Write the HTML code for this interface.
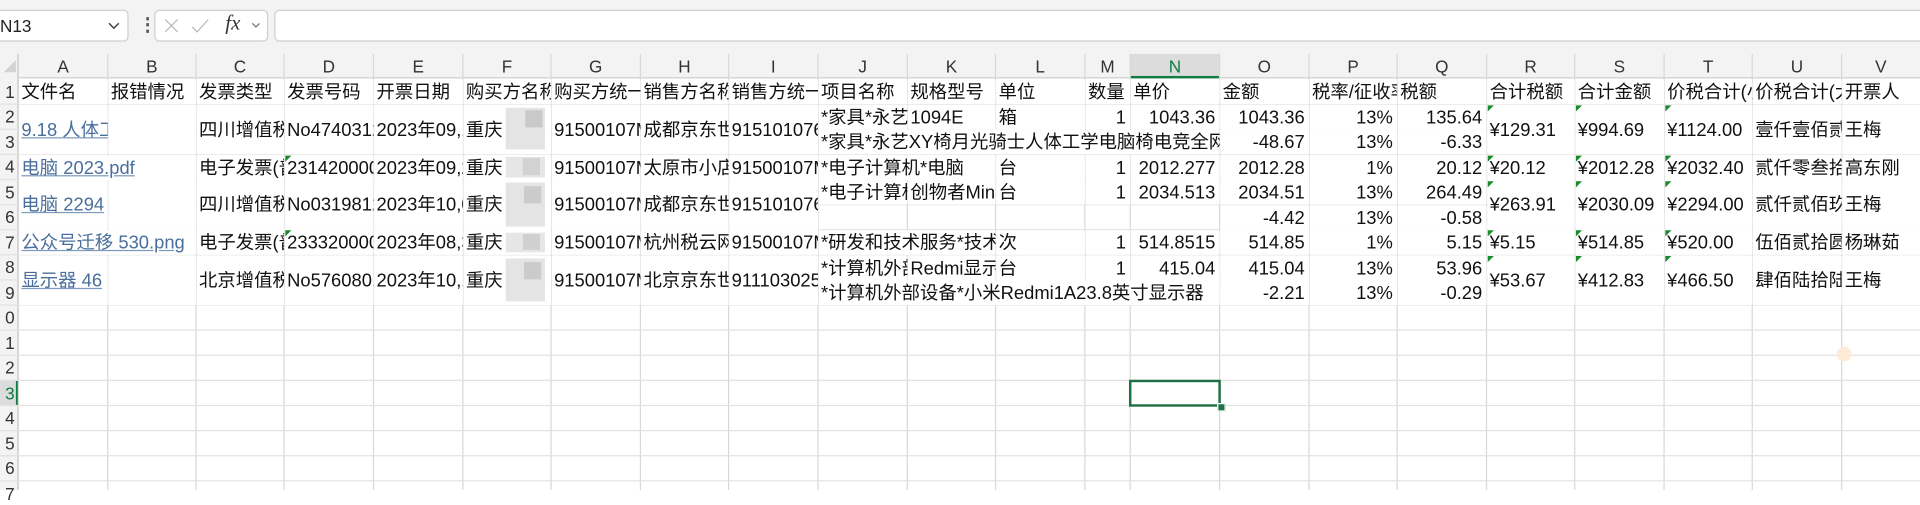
<!DOCTYPE html>
<html><head><meta charset="utf-8">
<style>
html,body{margin:0;padding:0;background:#fff;width:1920px;height:490px;overflow:hidden}
#s{position:absolute;left:0;top:0;width:1568px;height:400px;transform:scale(1.22449,1.225);transform-origin:0 0;font-family:"Liberation Sans","Noto Sans CJK SC",sans-serif;font-size:15px;color:#111}
.c{position:absolute;overflow:hidden;white-space:nowrap;background:#fff;padding-left:2px;box-sizing:border-box;height:20px;line-height:21px}
.m{height:40.5px;line-height:41px}
.r{text-align:right;padding-right:3px;padding-left:0}
.a{color:#4a6f9c;text-decoration:underline;text-decoration-color:#7d99bb}
.h{position:absolute;top:44px;height:19px;line-height:20px;text-align:center;color:#333;font-size:14px}
.rn{position:absolute;left:-4px;width:16px;text-align:right;color:#333;font-size:14px;line-height:20px;overflow:hidden;direction:rtl}
.t{position:absolute;width:0;height:0;border-top:5px solid #1a8a2a;border-right:5px solid transparent}
.b{position:absolute;background:#dedede}
</style></head><body><div id="s">
<div style="position:absolute;left:0;top:0;width:1568px;height:44px;background:#f3f3f3"></div>
<div style="position:absolute;left:-4px;top:8px;width:109px;height:26px;background:#fff;border:1px solid #cfcfcf;border-radius:4px;box-sizing:border-box"></div>
<div style="position:absolute;left:0;top:8px;line-height:26px;font-size:14px;color:#222">N13</div>
<svg style="position:absolute;left:88px;top:16px" width="10" height="10"><path d="M1 3 L5 7 L9 3" stroke="#444" fill="none" stroke-width="1.2"/></svg>
<div style="position:absolute;left:113px;top:11px;font-size:15px;color:#555;font-weight:bold">⋮</div>
<div style="position:absolute;left:126px;top:8px;width:93px;height:26px;background:#fff;border:1px solid #cfcfcf;border-radius:4px;box-sizing:border-box"></div>
<svg style="position:absolute;left:132px;top:13px" width="80" height="16"><path d="M3 3 L13 13 M13 3 L3 13" stroke="#b8b8b8" fill="none" stroke-width="1"/><path d="M25 9 L29 13 L38 3" stroke="#b8b8b8" fill="none" stroke-width="1"/><path d="M74 6 L77 9 L80 6" stroke="#777" fill="none" stroke-width="1"/></svg>
<div style="position:absolute;left:184px;top:9px;font-family:'Liberation Serif',serif;font-style:italic;font-size:17px;color:#333">fx</div>
<div style="position:absolute;left:224px;top:8px;width:1350px;height:26px;background:#fff;border:1px solid #cfcfcf;border-radius:4px;box-sizing:border-box"></div>
<div style="position:absolute;left:0;top:44px;width:1568px;height:20px;background:#f3f3f3;border-bottom:1px solid #cfcfcf;box-sizing:border-box"></div>
<div style="position:absolute;left:0;top:44px;width:15px;height:356px;background:#f3f3f3;border-right:1px solid #cfcfcf;box-sizing:border-box"></div>
<svg style="position:absolute;left:2px;top:48px" width="12" height="12"><path d="M11 1 L11 11 L1 11 Z" fill="#d3d3d3"/></svg>
<div style="position:absolute;left:923px;top:44px;width:73px;height:20px;background:#dcdcdc;border-bottom:2px solid #107c41;box-sizing:border-box"></div>
<div style="position:absolute;left:0;top:310.5px;width:15px;height:20.5px;background:#dcdcdc;border-right:2px solid #107c41;box-sizing:border-box"></div>
<svg style="position:absolute;left:0;top:0" width="1568" height="400">
<g stroke="#d8d8d8" stroke-width="1">
<path d="M15 44V400M88 44V400M160 44V400M232 44V400M305 44V400M378 44V400M450 44V400M523 44V400M595 44V400M668 44V400M741 44V400M813 44V400M886 44V400M923 44V400M996 44V400M1069 44V400M1141 44V400M1214 44V400M1286 44V400M1359 44V400M1431 44V400M1504 44V400"/>
</g>
<g stroke="#e2e2e2" stroke-width="1">
<path d="M0 85H1568M0 105.5H1568M0 126H1568M0 146.5H1568M0 167H1568M0 187.5H1568M0 208H1568M0 228.5H1568M0 249H1568M0 269.5H1568M0 290H1568M0 310.5H1568M0 331H1568M0 351.5H1568M0 372H1568M0 392.5H1568"/>
</g>
</svg>
<div class="h" style="left:15px;width:73px">A</div><div class="h" style="left:88px;width:72px">B</div><div class="h" style="left:160px;width:72px">C</div><div class="h" style="left:232px;width:73px">D</div><div class="h" style="left:305px;width:73px">E</div><div class="h" style="left:378px;width:72px">F</div><div class="h" style="left:450px;width:73px">G</div><div class="h" style="left:523px;width:72px">H</div><div class="h" style="left:595px;width:73px">I</div><div class="h" style="left:668px;width:73px">J</div><div class="h" style="left:741px;width:72px">K</div><div class="h" style="left:813px;width:73px">L</div><div class="h" style="left:886px;width:37px">M</div><div class="h" style="left:923px;width:73px;color:#107c41">N</div><div class="h" style="left:996px;width:73px">O</div><div class="h" style="left:1069px;width:72px">P</div><div class="h" style="left:1141px;width:73px">Q</div><div class="h" style="left:1214px;width:72px">R</div><div class="h" style="left:1286px;width:73px">S</div><div class="h" style="left:1359px;width:72px">T</div><div class="h" style="left:1431px;width:73px">U</div><div class="h" style="left:1504px;width:64px">V</div>
<div class="rn" style="top:64.5px">1</div><div class="rn" style="top:85px">2</div><div class="rn" style="top:105.5px">3</div><div class="rn" style="top:126px">4</div><div class="rn" style="top:146.5px">5</div><div class="rn" style="top:167px">6</div><div class="rn" style="top:187.5px">7</div><div class="rn" style="top:208px">8</div><div class="rn" style="top:228.5px">9</div><div class="rn" style="top:249px">0</div><div class="rn" style="top:269.5px">1</div><div class="rn" style="top:290px">2</div><div class="rn" style="top:310.5px;color:#107c41">3</div><div class="rn" style="top:331px">4</div><div class="rn" style="top:351.5px">5</div><div class="rn" style="top:372px">6</div><div class="rn" style="top:392.5px">7</div>
<div class="c" style="left:15.5px;top:65px;width:72px">文件名</div>
<div class="c" style="left:88.5px;top:65px;width:71px">报错情况</div>
<div class="c" style="left:160.5px;top:65px;width:71px">发票类型</div>
<div class="c" style="left:232.5px;top:65px;width:72px">发票号码</div>
<div class="c" style="left:305.5px;top:65px;width:72px">开票日期</div>
<div class="c" style="left:378.5px;top:65px;width:71px">购买方名称</div>
<div class="c" style="left:450.5px;top:65px;width:72px">购买方统一社会</div>
<div class="c" style="left:523.5px;top:65px;width:71px">销售方名称</div>
<div class="c" style="left:595.5px;top:65px;width:72px">销售方统一社会</div>
<div class="c" style="left:668.5px;top:65px;width:72px">项目名称</div>
<div class="c" style="left:741.5px;top:65px;width:71px">规格型号</div>
<div class="c" style="left:813.5px;top:65px;width:72px">单位</div>
<div class="c" style="left:886.5px;top:65px;width:36px">数量</div>
<div class="c" style="left:923.5px;top:65px;width:72px">单价</div>
<div class="c" style="left:996.5px;top:65px;width:72px">金额</div>
<div class="c" style="left:1069.5px;top:65px;width:71px">税率/征收率</div>
<div class="c" style="left:1141.5px;top:65px;width:72px">税额</div>
<div class="c" style="left:1214.5px;top:65px;width:71px">合计税额</div>
<div class="c" style="left:1286.5px;top:65px;width:72px">合计金额</div>
<div class="c" style="left:1359.5px;top:65px;width:71px">价税合计(小写)</div>
<div class="c" style="left:1431.5px;top:65px;width:72px">价税合计(大写)</div>
<div class="c" style="left:1504.5px;top:65px;width:64px">开票人</div>
<div class="c m" style="left:15.5px;top:85.5px;width:72px"><span class="a">9.18 人体工学椅.pdf</span></div>
<div class="c m" style="left:88.5px;top:85.5px;width:71px"></div>
<div class="c m" style="left:160.5px;top:85.5px;width:71px">四川增值税电子普通发票</div>
<div class="c m" style="left:232.5px;top:85.5px;width:72px">No47403123</div>
<div class="c m" style="left:305.5px;top:85.5px;width:72px">2023年09,18日</div>
<div class="c m" style="left:378.5px;top:85.5px;width:71px">重庆</div>
<div class="c m" style="left:450.5px;top:85.5px;width:72px">91500107MA</div>
<div class="c m" style="left:523.5px;top:85.5px;width:71px">成都京东世纪贸易</div>
<div class="c m" style="left:595.5px;top:85.5px;width:72px">915101076</div>
<div class="c" style="left:668.5px;top:85.5px;width:72px">*家具*永艺XY</div>
<div class="c" style="left:741.5px;top:85.5px;width:71px">1094E</div>
<div class="c" style="left:813.5px;top:85.5px;width:72px">箱</div>
<div class="c r" style="left:886.5px;top:85.5px;width:36px">1</div>
<div class="c r" style="left:923.5px;top:85.5px;width:72px">1043.36</div>
<div class="c r" style="left:996.5px;top:85.5px;width:72px">1043.36</div>
<div class="c r" style="left:1069.5px;top:85.5px;width:71px">13%</div>
<div class="c r" style="left:1141.5px;top:85.5px;width:72px">135.64</div>
<div class="c" style="left:668.5px;top:106px;width:327px">*家具*永艺XY椅月光骑士人体工学电脑椅电竞全网</div>
<div class="c r" style="left:996.5px;top:106px;width:72px">-48.67</div>
<div class="c r" style="left:1069.5px;top:106px;width:71px">13%</div>
<div class="c r" style="left:1141.5px;top:106px;width:72px">-6.33</div>
<div class="c m" style="left:1214.5px;top:85.5px;width:71px">¥129.31</div>
<div class="c m" style="left:1286.5px;top:85.5px;width:72px">¥994.69</div>
<div class="c m" style="left:1359.5px;top:85.5px;width:71px">¥1124.00</div>
<div class="c m" style="left:1431.5px;top:85.5px;width:72px">壹仟壹佰贰拾肆元整</div>
<div class="c m" style="left:1504.5px;top:85.5px;width:64px">王梅</div>
<div class="c" style="left:15.5px;top:126.5px;width:144px"><span class="a">电脑 2023.pdf</span></div>
<div class="c" style="left:160.5px;top:126.5px;width:71px">电子发票(普通发票)</div>
<div class="c" style="left:232.5px;top:126.5px;width:72px">23142000000</div>
<div class="c" style="left:305.5px;top:126.5px;width:72px">2023年09,25日</div>
<div class="c" style="left:378.5px;top:126.5px;width:71px">重庆</div>
<div class="c" style="left:450.5px;top:126.5px;width:72px">91500107MA</div>
<div class="c" style="left:523.5px;top:126.5px;width:71px">太原市小店区</div>
<div class="c" style="left:595.5px;top:126.5px;width:72px">91500107MA</div>
<div class="c" style="left:668.5px;top:126.5px;width:144px">*电子计算机*电脑</div>
<div class="c" style="left:813.5px;top:126.5px;width:72px">台</div>
<div class="c r" style="left:886.5px;top:126.5px;width:36px">1</div>
<div class="c r" style="left:923.5px;top:126.5px;width:72px">2012.277</div>
<div class="c r" style="left:996.5px;top:126.5px;width:72px">2012.28</div>
<div class="c r" style="left:1069.5px;top:126.5px;width:71px">1%</div>
<div class="c r" style="left:1141.5px;top:126.5px;width:72px">20.12</div>
<div class="c" style="left:1214.5px;top:126.5px;width:71px">¥20.12</div>
<div class="c" style="left:1286.5px;top:126.5px;width:72px">¥2012.28</div>
<div class="c" style="left:1359.5px;top:126.5px;width:71px">¥2032.40</div>
<div class="c" style="left:1431.5px;top:126.5px;width:72px">贰仟零叁拾贰元肆角</div>
<div class="c" style="left:1504.5px;top:126.5px;width:64px">高东刚</div>
<div class="c m" style="left:15.5px;top:147px;width:72px"><span class="a">电脑 2294 </span></div>
<div class="c m" style="left:88.5px;top:147px;width:71px"></div>
<div class="c m" style="left:160.5px;top:147px;width:71px">四川增值税电子普通发票</div>
<div class="c m" style="left:232.5px;top:147px;width:72px">No03198123</div>
<div class="c m" style="left:305.5px;top:147px;width:72px">2023年10,05日</div>
<div class="c m" style="left:378.5px;top:147px;width:71px">重庆</div>
<div class="c m" style="left:450.5px;top:147px;width:72px">91500107MA</div>
<div class="c m" style="left:523.5px;top:147px;width:71px">成都京东世纪贸易</div>
<div class="c m" style="left:595.5px;top:147px;width:72px">915101076</div>
<div class="c" style="left:668.5px;top:147px;width:72px">*电子计算机*</div>
<div class="c" style="left:741.5px;top:147px;width:71px">创物者Mini</div>
<div class="c" style="left:813.5px;top:147px;width:72px">台</div>
<div class="c r" style="left:886.5px;top:147px;width:36px">1</div>
<div class="c r" style="left:923.5px;top:147px;width:72px">2034.513</div>
<div class="c r" style="left:996.5px;top:147px;width:72px">2034.51</div>
<div class="c r" style="left:1069.5px;top:147px;width:71px">13%</div>
<div class="c r" style="left:1141.5px;top:147px;width:72px">264.49</div>
<div class="c r" style="left:996.5px;top:167.5px;width:72px">-4.42</div>
<div class="c r" style="left:1069.5px;top:167.5px;width:71px">13%</div>
<div class="c r" style="left:1141.5px;top:167.5px;width:72px">-0.58</div>
<div class="c m" style="left:1214.5px;top:147px;width:71px">¥263.91</div>
<div class="c m" style="left:1286.5px;top:147px;width:72px">¥2030.09</div>
<div class="c m" style="left:1359.5px;top:147px;width:71px">¥2294.00</div>
<div class="c m" style="left:1431.5px;top:147px;width:72px">贰仟贰佰玖拾肆元整</div>
<div class="c m" style="left:1504.5px;top:147px;width:64px">王梅</div>
<div class="c" style="left:15.5px;top:188px;width:144px"><span class="a">公众号迁移 530.png</span></div>
<div class="c" style="left:160.5px;top:188px;width:71px">电子发票(普通发票)</div>
<div class="c" style="left:232.5px;top:188px;width:72px">23332000000</div>
<div class="c" style="left:305.5px;top:188px;width:72px">2023年08,30日</div>
<div class="c" style="left:378.5px;top:188px;width:71px">重庆</div>
<div class="c" style="left:450.5px;top:188px;width:72px">91500107MA</div>
<div class="c" style="left:523.5px;top:188px;width:71px">杭州税云网络</div>
<div class="c" style="left:595.5px;top:188px;width:72px">91500107MA</div>
<div class="c" style="left:668.5px;top:188px;width:144px">*研发和技术服务*技术服务费</div>
<div class="c" style="left:813.5px;top:188px;width:72px">次</div>
<div class="c r" style="left:886.5px;top:188px;width:36px">1</div>
<div class="c r" style="left:923.5px;top:188px;width:72px">514.8515</div>
<div class="c r" style="left:996.5px;top:188px;width:72px">514.85</div>
<div class="c r" style="left:1069.5px;top:188px;width:71px">1%</div>
<div class="c r" style="left:1141.5px;top:188px;width:72px">5.15</div>
<div class="c" style="left:1214.5px;top:188px;width:71px">¥5.15</div>
<div class="c" style="left:1286.5px;top:188px;width:72px">¥514.85</div>
<div class="c" style="left:1359.5px;top:188px;width:71px">¥520.00</div>
<div class="c" style="left:1431.5px;top:188px;width:72px">伍佰贰拾圆整</div>
<div class="c" style="left:1504.5px;top:188px;width:64px">杨琳茹</div>
<div class="c m" style="left:15.5px;top:208.5px;width:72px"><span class="a">显示器 46</span></div>
<div class="c m" style="left:88.5px;top:208.5px;width:71px"></div>
<div class="c m" style="left:160.5px;top:208.5px;width:71px">北京增值税电子普通发票</div>
<div class="c m" style="left:232.5px;top:208.5px;width:72px">No57608012</div>
<div class="c m" style="left:305.5px;top:208.5px;width:72px">2023年10,12日</div>
<div class="c m" style="left:378.5px;top:208.5px;width:71px">重庆</div>
<div class="c m" style="left:450.5px;top:208.5px;width:72px">91500107MA</div>
<div class="c m" style="left:523.5px;top:208.5px;width:71px">北京京东世纪信息</div>
<div class="c m" style="left:595.5px;top:208.5px;width:72px">911103025</div>
<div class="c" style="left:668.5px;top:208.5px;width:72px">*计算机外部设备</div>
<div class="c" style="left:741.5px;top:208.5px;width:71px">Redmi显示器</div>
<div class="c" style="left:813.5px;top:208.5px;width:72px">台</div>
<div class="c r" style="left:886.5px;top:208.5px;width:36px">1</div>
<div class="c r" style="left:923.5px;top:208.5px;width:72px">415.04</div>
<div class="c r" style="left:996.5px;top:208.5px;width:72px">415.04</div>
<div class="c r" style="left:1069.5px;top:208.5px;width:71px">13%</div>
<div class="c r" style="left:1141.5px;top:208.5px;width:72px">53.96</div>
<div class="c" style="left:668.5px;top:229px;width:327px">*计算机外部设备*小米Redmi1A23.8英寸显示器</div>
<div class="c r" style="left:996.5px;top:229px;width:72px">-2.21</div>
<div class="c r" style="left:1069.5px;top:229px;width:71px">13%</div>
<div class="c r" style="left:1141.5px;top:229px;width:72px">-0.29</div>
<div class="c m" style="left:1214.5px;top:208.5px;width:71px">¥53.67</div>
<div class="c m" style="left:1286.5px;top:208.5px;width:72px">¥412.83</div>
<div class="c m" style="left:1359.5px;top:208.5px;width:71px">¥466.50</div>
<div class="c m" style="left:1431.5px;top:208.5px;width:72px">肆佰陆拾陆元伍角</div>
<div class="c m" style="left:1504.5px;top:208.5px;width:64px">王梅</div>
<div class="b" style="left:413px;top:88px;width:32px;height:34px;background:#e4e4e4"></div>
<div class="b" style="left:429px;top:90px;width:14px;height:14px;background:#c9c9c9"></div>
<div class="b" style="left:413px;top:128px;width:32px;height:17px;background:#e6e6e6"></div>
<div class="b" style="left:427px;top:129px;width:14px;height:14px;background:#d2d2d2"></div>
<div class="b" style="left:413px;top:149px;width:32px;height:36px;background:#e4e4e4"></div>
<div class="b" style="left:428px;top:152px;width:14px;height:14px;background:#cbcbcb"></div>
<div class="b" style="left:413px;top:190px;width:32px;height:16px;background:#e6e6e6"></div>
<div class="b" style="left:427px;top:191px;width:14px;height:13px;background:#d0d0d0"></div>
<div class="b" style="left:413px;top:211px;width:32px;height:35px;background:#e4e4e4"></div>
<div class="b" style="left:428px;top:214px;width:14px;height:14px;background:#cbcbcb"></div>
<div class="t" style="left:233px;top:127px"></div><div class="t" style="left:233px;top:188px"></div>
<div class="t" style="left:1215px;top:86px"></div><div class="t" style="left:1287px;top:86px"></div><div class="t" style="left:1360px;top:86px"></div>
<div class="t" style="left:1215px;top:127px"></div><div class="t" style="left:1287px;top:127px"></div><div class="t" style="left:1360px;top:127px"></div>
<div class="t" style="left:1215px;top:147.5px"></div><div class="t" style="left:1287px;top:147.5px"></div><div class="t" style="left:1360px;top:147.5px"></div>
<div class="t" style="left:1215px;top:188px"></div><div class="t" style="left:1287px;top:188px"></div><div class="t" style="left:1360px;top:188px"></div>
<div class="t" style="left:1215px;top:209px"></div><div class="t" style="left:1287px;top:209px"></div><div class="t" style="left:1360px;top:209px"></div>
<div style="position:absolute;left:922px;top:309.5px;width:75px;height:22.5px;border:2px solid #1e7145;box-sizing:border-box"></div>
<div style="position:absolute;left:993.5px;top:328.5px;width:5px;height:5px;background:#1e7145;border:1px solid #fff"></div>
<div style="position:absolute;left:1500px;top:283px;width:12px;height:12px;border-radius:6px;background:#fdebd8"></div>
</div></body></html>
